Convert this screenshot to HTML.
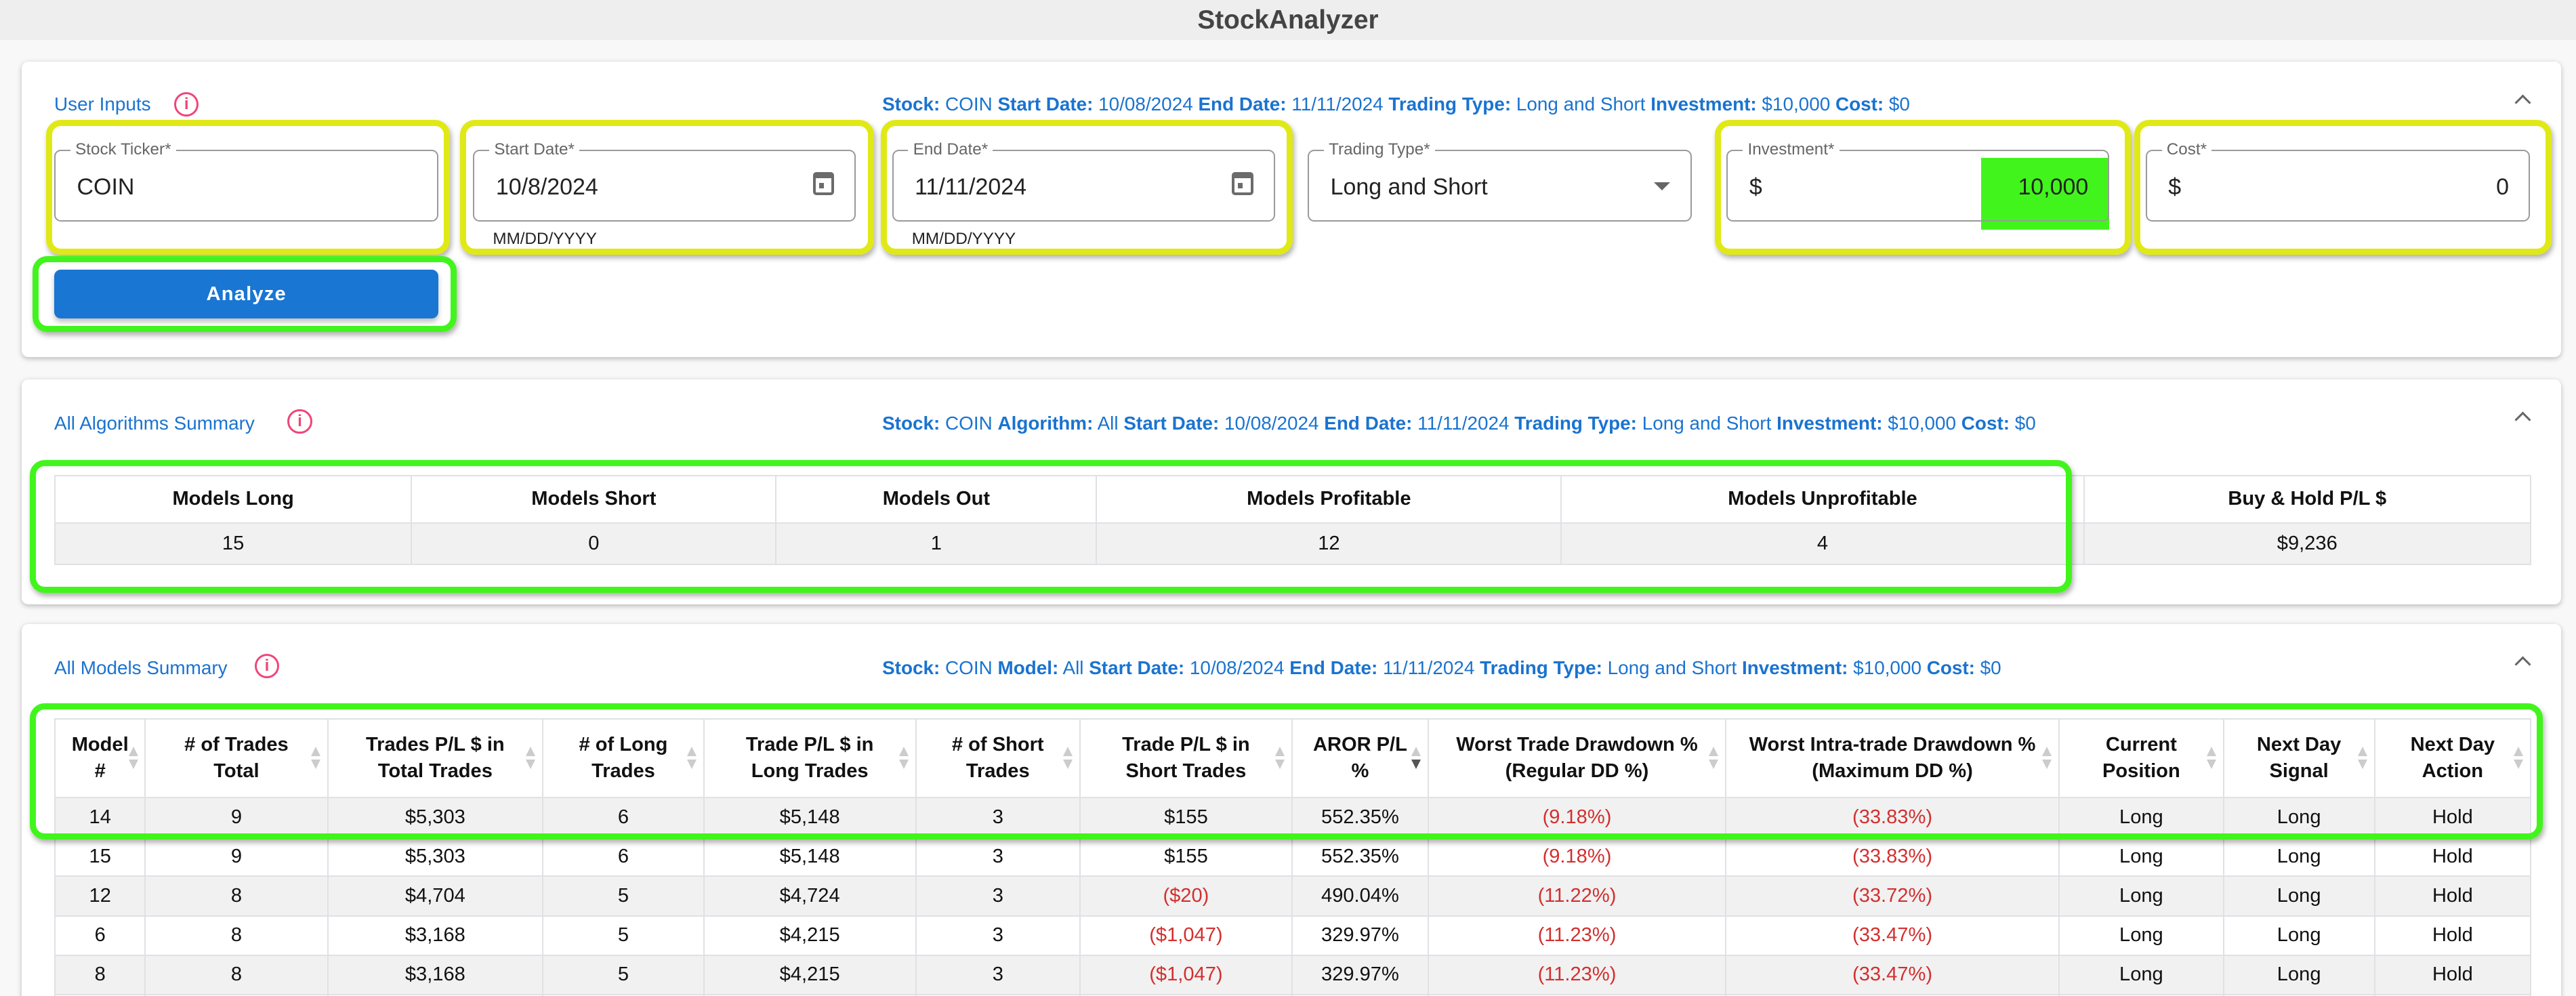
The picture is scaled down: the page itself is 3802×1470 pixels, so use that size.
<!DOCTYPE html>
<html><head><meta charset="utf-8"><style>
*{box-sizing:border-box;margin:0;padding:0}
html,body{width:3802px;height:1470px;overflow:hidden;background:#f8f8f8}
#root{zoom:2.42474;width:1568px;height:607px;position:relative;font-family:"Liberation Sans",Arial,sans-serif;color:#111}
.abs{position:absolute}
.top{left:0;top:0;width:1568px;height:24.5px;background:#eee;text-align:center;font-size:16px;font-weight:bold;color:#444;line-height:25px}
.card{background:#fff;left:13px;width:1546px;border-radius:4px;box-shadow:0 1px 3px rgba(0,0,0,.25)}
.ttl{color:#1a73d0;font-size:11.5px}
.info{width:15px;height:15px;border:1.5px solid #f0457a;border-radius:50%;color:#f0457a;font-size:10px;text-align:center;line-height:12px;font-weight:bold}
.sum{color:#1a73d0;font-size:11.5px;white-space:nowrap}
.sum b{font-weight:bold}
.caret{width:7px;height:7px;border-left:1.6px solid #666;border-top:1.6px solid #666;transform:rotate(45deg)}
.yel{border:4px solid #e0e916;border-radius:9px;box-shadow:1px 2px 3px rgba(0,0,0,.3)}
.grn{border:4px solid #41f51c;border-radius:9px;box-shadow:1px 2px 3px rgba(0,0,0,.3)}
.fld{border:1px solid #9a9a9a;border-radius:4px;height:44px;top:91px;background:transparent}
.lbl{font-size:10px;color:#666;background:#fff;padding:0 3px;top:-7px;left:9px;line-height:12px}
.val{font-size:14px;color:#222;top:14px;left:13px}
.help{font-size:10px;color:#222;top:140px}
.cal{width:13px;height:14px;border:2px solid #6b6b6b;border-top-width:4px;border-radius:2px}
.cal:after{content:"";position:absolute;left:2px;top:3px;width:3px;height:3px;background:#6b6b6b}
table{border-collapse:collapse;position:absolute;font-size:12px;table-layout:fixed}
td,th{border:1px solid #dfe1e5;text-align:center;vertical-align:middle}
th{font-weight:bold;background:#fff}
tbody tr:nth-child(odd) td{background:#f1f1f1}
.r{color:#d32f2f}
.s{position:relative}
.s:after{content:"";position:absolute;right:4px;top:50%;margin-top:-7px;width:0;height:0;border-left:3px solid transparent;border-right:3px solid transparent;border-bottom:6px solid #ccc}
.s:before{content:"";position:absolute;right:4px;top:50%;margin-top:1px;width:0;height:0;border-left:3px solid transparent;border-right:3px solid transparent;border-top:6px solid #ccc}
.s.d:before{border-top-color:#555}
</style></head><body><div id="root">
<div class="abs top">StockAnalyzer</div>

<div class="abs card" style="top:37.5px;height:180px"></div>
<div class="abs ttl" style="left:33px;top:57px">User Inputs</div>
<div class="abs info" style="left:106px;top:56px">i</div>
<div class="abs sum" style="left:537px;top:57px"><b>Stock:</b> COIN <b>Start Date:</b> 10/08/2024 <b>End Date:</b> 11/11/2024 <b>Trading Type:</b> Long and Short <b>Investment:</b> $10,000 <b>Cost:</b> $0</div>
<div class="abs caret" style="left:1532px;top:59px"></div>

<div class="abs yel" style="left:28px;top:73px;width:246px;height:82px"></div>
<div class="abs yel" style="left:280px;top:73px;width:252px;height:82px"></div>
<div class="abs yel" style="left:536px;top:73px;width:251px;height:82px"></div>
<div class="abs yel" style="left:1044px;top:73px;width:253px;height:82px"></div>
<div class="abs yel" style="left:1299px;top:73px;width:254px;height:82px"></div>

<div class="abs fld" style="left:33px;width:234px"><span class="abs lbl">Stock Ticker*</span><span class="abs val">COIN</span></div>
<div class="abs fld" style="left:288px;width:233px"><span class="abs lbl">Start Date*</span><span class="abs val">10/8/2024</span><span class="abs cal" style="left:206px;top:13px"></span></div>
<div class="abs help" style="left:300px">MM/DD/YYYY</div>
<div class="abs fld" style="left:543px;width:233px"><span class="abs lbl">End Date*</span><span class="abs val">11/11/2024</span><span class="abs cal" style="left:206px;top:13px"></span></div>
<div class="abs help" style="left:555px">MM/DD/YYYY</div>
<div class="abs fld" style="left:796px;width:234px"><span class="abs lbl">Trading Type*</span><span class="abs val">Long and Short</span><span class="abs" style="left:210px;top:19px;width:0;height:0;border-left:5px solid transparent;border-right:5px solid transparent;border-top:5px solid #666"></span></div>
<div class="abs" style="left:1206px;top:96px;width:78px;height:44px;background:#41f51c"></div>
<div class="abs fld" style="left:1051px;width:233px"><span class="abs lbl">Investment*</span><span class="abs val">$</span><span class="abs val" style="left:auto;right:12px">10,000</span></div>
<div class="abs fld" style="left:1306px;width:234px"><span class="abs lbl">Cost*</span><span class="abs val">$</span><span class="abs val" style="left:auto;right:12px">0</span></div>

<div class="abs grn" style="left:20px;top:156px;width:258px;height:46px"></div>
<div class="abs" style="left:33px;top:164px;width:234px;height:30px;background:#1976d2;border-radius:4px;color:#fff;font-size:12px;font-weight:bold;text-align:center;line-height:30px;letter-spacing:.5px;box-shadow:0 2px 3px rgba(0,0,0,.25)">Analyze</div>

<div class="abs card" style="top:231px;height:137px"></div>
<div class="abs ttl" style="left:33px;top:251px">All Algorithms Summary</div>
<div class="abs info" style="left:175px;top:249px">i</div>
<div class="abs sum" style="left:537px;top:251px"><b>Stock:</b> COIN <b>Algorithm:</b> All <b>Start Date:</b> 10/08/2024 <b>End Date:</b> 11/11/2024 <b>Trading Type:</b> Long and Short <b>Investment:</b> $10,000 <b>Cost:</b> $0</div>
<div class="abs caret" style="left:1532px;top:252px"></div>
<table style="left:33px;top:289px;width:1507px">
<colgroup><col style="width:217px"><col style="width:222px"><col style="width:195px"><col style="width:283px"><col style="width:318px"><col style="width:272px"></colgroup>
<thead><tr style="height:29px"><th>Models Long</th><th>Models Short</th><th>Models Out</th><th>Models Profitable</th><th>Models Unprofitable</th><th>Buy &amp; Hold P/L $</th></tr></thead>
<tbody><tr style="height:25px"><td>15</td><td>0</td><td>1</td><td>12</td><td>4</td><td>$9,236</td></tr></tbody></table>
<div class="abs grn" style="left:18px;top:280px;width:1243px;height:81px"></div>

<div class="abs card" style="top:380px;height:240px"></div>
<div class="abs ttl" style="left:33px;top:400px">All Models Summary</div>
<div class="abs info" style="left:155px;top:398px">i</div>
<div class="abs sum" style="left:537px;top:400px"><b>Stock:</b> COIN <b>Model:</b> All <b>Start Date:</b> 10/08/2024 <b>End Date:</b> 11/11/2024 <b>Trading Type:</b> Long and Short <b>Investment:</b> $10,000 <b>Cost:</b> $0</div>
<div class="abs caret" style="left:1532px;top:401px"></div>
<table style="left:33px;top:437px;width:1507px">
<colgroup><col style="width:55px"><col style="width:111px"><col style="width:131px"><col style="width:98px"><col style="width:129px"><col style="width:100px"><col style="width:129px"><col style="width:83px"><col style="width:181px"><col style="width:203px"><col style="width:100px"><col style="width:92px"><col style="width:95px"></colgroup>
<thead><tr style="height:48px;line-height:16px">
<th class="s">Model<br>#</th><th class="s"># of Trades<br>Total</th><th class="s">Trades P/L $ in<br>Total Trades</th><th class="s"># of Long<br>Trades</th><th class="s">Trade P/L $ in<br>Long Trades</th><th class="s"># of Short<br>Trades</th><th class="s">Trade P/L $ in<br>Short Trades</th><th class="s d">AROR P/L<br>%</th><th class="s">Worst Trade Drawdown %<br>(Regular DD %)</th><th class="s">Worst Intra-trade Drawdown %<br>(Maximum DD %)</th><th class="s">Current<br>Position</th><th class="s">Next Day<br>Signal</th><th class="s">Next Day<br>Action</th></tr></thead>
<tbody>
<tr style="height:24px"><td>14</td><td>9</td><td>$5,303</td><td>6</td><td>$5,148</td><td>3</td><td>$155</td><td>552.35%</td><td class="r">(9.18%)</td><td class="r">(33.83%)</td><td>Long</td><td>Long</td><td>Hold</td></tr>
<tr style="height:24px"><td>15</td><td>9</td><td>$5,303</td><td>6</td><td>$5,148</td><td>3</td><td>$155</td><td>552.35%</td><td class="r">(9.18%)</td><td class="r">(33.83%)</td><td>Long</td><td>Long</td><td>Hold</td></tr>
<tr style="height:24px"><td>12</td><td>8</td><td>$4,704</td><td>5</td><td>$4,724</td><td>3</td><td class="r">($20)</td><td>490.04%</td><td class="r">(11.22%)</td><td class="r">(33.72%)</td><td>Long</td><td>Long</td><td>Hold</td></tr>
<tr style="height:24px"><td>6</td><td>8</td><td>$3,168</td><td>5</td><td>$4,215</td><td>3</td><td class="r">($1,047)</td><td>329.97%</td><td class="r">(11.23%)</td><td class="r">(33.47%)</td><td>Long</td><td>Long</td><td>Hold</td></tr>
<tr style="height:24px"><td>8</td><td>8</td><td>$3,168</td><td>5</td><td>$4,215</td><td>3</td><td class="r">($1,047)</td><td>329.97%</td><td class="r">(11.23%)</td><td class="r">(33.47%)</td><td>Long</td><td>Long</td><td>Hold</td></tr>
<tr style="height:24px"><td></td><td></td><td></td><td></td><td></td><td></td><td></td><td></td><td></td><td></td><td></td><td></td><td></td></tr>
</tbody></table>
<div class="abs grn" style="left:18px;top:428px;width:1530px;height:83px"></div>
</div></body></html>
